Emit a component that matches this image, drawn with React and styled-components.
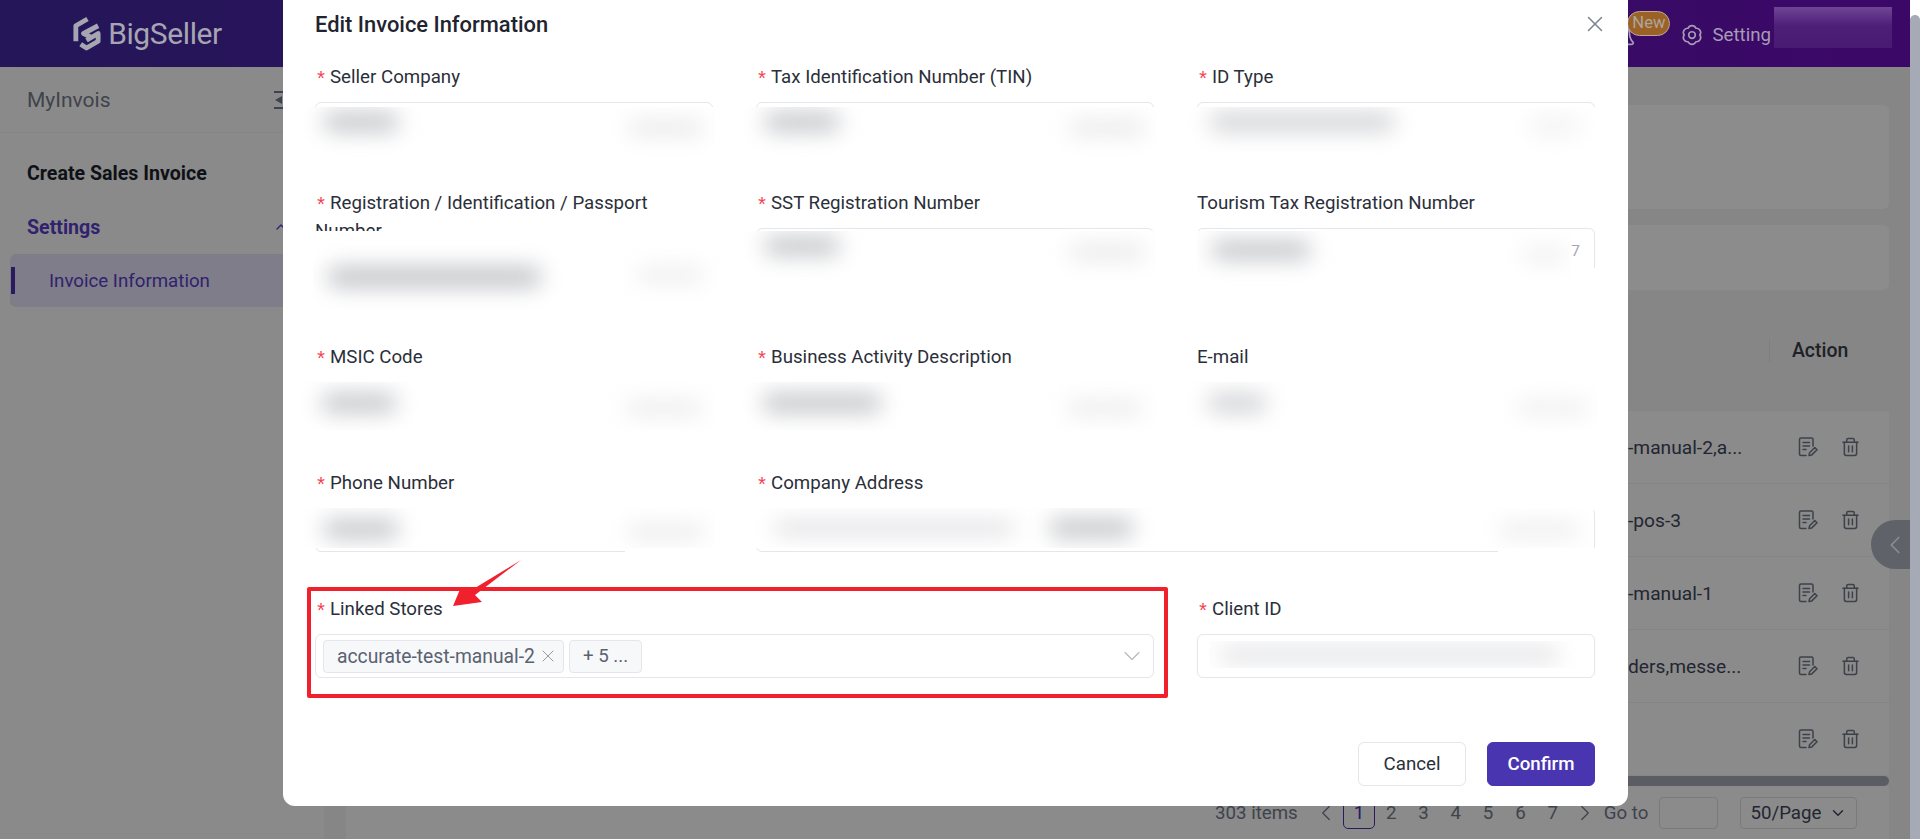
import React from 'react';
import styled, { createGlobalStyle } from 'styled-components';
import { X, ChevronDown, ChevronLeft, ChevronRight, ChevronUp, Bell } from 'lucide-react';

const GlobalStyle = createGlobalStyle`
	html, body {
		margin: 0;
		padding: 0;
		height: 100%;
		overflow: hidden;
		font-family: Roboto, "Liberation Sans", sans-serif;
	}
	* {
		box-sizing: border-box;
	}
`

const Page = styled.div`
	position: relative;
	display: flex;
	width: 1920px;
	height: 839px;
	overflow: hidden;
	background: #f5f5f5;
`

const Viewport = styled.div`
	flex: 1;
	display: flex;
	flex-direction: column;
	min-width: 0;
`

const Scrollbar = styled.div`
	width: 10px;
	padding-top: 15px;
	background: #fff;
	position: relative;
	z-index: 3;

	&::after {
		content: '';
		display: block;
		height: 100%;
		border-radius: 5px 5px 0 0;
		background: #a6a9b6;
	}
`

/* the header sits above the overlay, its colours are already the dimmed ones */
const Header = styled.header`
	position: relative;
	z-index: 2;
	height: 67px;
	flex-shrink: 0;
	display: flex;
	align-items: center;
	background: linear-gradient(90deg, #241658 0%, #3c0868 100%);
`

const Brand = styled.div`
	width: 283px;
	padding-left: 10px;
	display: flex;
	justify-content: center;
	align-items: center;
	gap: 6px;
	color: #a6a6b2;
	font-size: 30px;
	letter-spacing: -0.4px;
`

const HeaderTools = styled.div`
	margin-left: auto;
	display: flex;
	align-items: center;
	height: 100%;
	color: #a69cb6;
	font-size: 18.7px;
`

const BellWrap = styled.div`
	position: relative;
	width: 30px;
	height: 30px;
	margin-right: 44px;
	margin-top: 8px;
`

const NewBadge = styled.span`
	position: absolute;
	left: 20px;
	top: -12px;
	width: 43px;
	height: 25px;
	line-height: 22px;
	text-align: center;
	border-radius: 13px;
	border: 1px solid #b8a99a;
	background: #9c6124;
	color: #aaa79f;
	font-size: 16.6px;
`

const SettingItem = styled.div`
	display: flex;
	align-items: center;
	gap: 9px;
	margin-top: 2px;
`

const UserBlur = styled.div`
	width: 118px;
	height: 41px;
	margin: -12px 18px 0 3px;
	background: linear-gradient(180deg, #6f4595 0%, #4f1f78 45%, #481a72 100%);
`

const Body = styled.div`
	flex: 1;
	display: flex;
	min-height: 0;
`

const Sidebar = styled.aside`
	width: 324px;
	flex-shrink: 0;
	background: #fcfcfc;
	padding: 0 10px;
`

const SideTitle = styled.div`
	height: 66px;
	margin: 0 -10px;
	padding: 0 30px 0 27px;
	display: flex;
	align-items: center;
	justify-content: space-between;
	font-size: 21px;
	color: #747b8c;
	border-bottom: 1px solid #f0f0f0;
`

const SideHeading = styled.div`
	height: 54px;
	margin-top: ${p => p.$first ? '13px' : '0'};
	padding-left: 17px;
	display: flex;
	align-items: center;
	justify-content: space-between;
	font-size: 19.6px;
	font-weight: 700;
	color: ${p => p.$active ? '#5a3fc8' : '#1b1f2a'};
`

const SideChevron = styled(ChevronUp)`
	margin-right: 25px;
`

const SideItem = styled.div`
	position: relative;
	height: 53px;
	padding-left: 39px;
	display: flex;
	align-items: center;
	border-radius: 6px;
	background: #e6e3fa;
	color: #5a3fc8;
	font-size: 18.7px;

	&::before {
		content: '';
		position: absolute;
		left: 1px;
		top: 13px;
		width: 4px;
		height: 27px;
		background: #4a32b0;
	}
`

const Main = styled.main`
	flex: 1;
	min-width: 0;
	padding: 38px 21px 0 22px;
	display: flex;
	flex-direction: column;
	align-items: stretch;
`

const Card = styled.div`
	height: ${p => p.$height}px;
	margin-bottom: ${p => p.$gap}px;
	background: #fff;
	border-radius: 6px;
	flex-shrink: 0;
`

const TablePanel = styled.div`
	flex: 1;
	display: flex;
	flex-direction: column;
`

const TableHead = styled.div`
	height: 120px;
	flex-shrink: 0;
	display: flex;
	align-items: center;
	justify-content: flex-end;
	font-size: 19.4px;
	font-weight: 500;
	color: #383c48;
`

const HeadCell = styled.div`
	width: 120px;
	padding-left: 22px;
	border-left: 1px solid #e6e6e6;
`

const Row = styled.div`
	height: 73px;
	flex-shrink: 0;
	display: flex;
	align-items: center;
	background: #fdfdfd;
	border-top: 1px solid #f0f0f0;
	font-size: 19.2px;
	color: #40465a;
`

const RowText = styled.div`
	flex: 1;
	padding-left: 1282px;
	white-space: nowrap;
`

const RowIcons = styled.div`
	width: 91px;
	flex-shrink: 0;
	display: flex;
	gap: 24px;
	color: #6f7788;
`

const TableScroll = styled.div`
	height: 10px;
	margin-top: 1px;
	flex-shrink: 0;
	border-radius: 0 5px 5px 0;
	background: #a4a9b4;
`

const Pager = styled.div`
	height: 54px;
	flex-shrink: 0;
	padding-left: 869px;
	display: flex;
	align-items: center;
	background: #fdfdfd;
	font-size: 18.7px;
	color: #747b8c;
	white-space: nowrap;
`

const PagerPrev = styled(ChevronLeft)`
	margin: 0 4px 0 15px;
	flex-shrink: 0;
`

const PagerNext = styled(ChevronRight)`
	margin: 0 6px 0 3px;
	flex-shrink: 0;
`

const PagerNum = styled.span`
	width: 32.3px;
	height: 32px;
	display: flex;
	align-items: center;
	justify-content: center;
	border-radius: 5px;
	border: 1px solid ${p => p.$active ? '#4a32b0' : 'transparent'};
	color: ${p => p.$active ? '#4a32b0' : 'inherit'};
`

const GoInput = styled.span`
	width: 59px;
	height: 32px;
	margin: 0 22px 0 11px;
	border: 1px solid #dedede;
	border-radius: 4px;
`

const PageSelect = styled.span`
	width: 117px;
	height: 32px;
	display: flex;
	align-items: center;
	justify-content: center;
	gap: 8px;
	border: 1px solid #dedede;
	border-radius: 4px;
	color: #40465a;
`

const CollapseTab = styled.div`
	position: absolute;
	right: 10px;
	top: 520px;
	width: 39px;
	height: 49px;
	padding-left: 9px;
	display: flex;
	align-items: center;
	justify-content: center;
	border-radius: 25px 0 0 25px;
	background: #adb3bd;
	color: #fff;
`

const Overlay = styled.div`
	position: absolute;
	inset: 0 10px 0 0;
	background: rgba(0, 0, 0, 0.45);
	z-index: 1;
`

const Modal = styled.section`
	position: absolute;
	left: 283px;
	top: 0;
	width: 1345px;
	height: 806px;
	padding: 0 33px 0 32px;
	display: flex;
	flex-direction: column;
	background: #fff;
	border-radius: 0 0 12px 12px;
	z-index: 3;
`

const ModalHead = styled.div`
	height: 50px;
	padding-bottom: 2px;
	flex-shrink: 0;
	display: flex;
	align-items: center;
	justify-content: space-between;
`

const ModalTitle = styled.h2`
	margin: 0;
	font-size: 21.9px;
	font-weight: 500;
	color: #1f2430;
`

const CloseBtn = styled.span`
	display: flex;
	color: #7d8590;
	margin-right: -13px;
`

const FormGrid = styled.div`
	display: grid;
	grid-template-columns: repeat(3, 398px);
	grid-template-rows: 126px 154px 126px 126px 126px;
	column-gap: 43px;
`

const Field = styled.div`
	position: relative;
	grid-column: ${p => p.$span ? `span ${p.$span}` : 'auto'};
	padding-top: 13px;
`

const Label = styled.div`
	height: ${p => p.$tall ? '65px' : '39px'};
	overflow: hidden;
	font-size: 18.7px;
	line-height: 28px;
	color: #2b2f3a;
`

const Star = styled.span`
	display: inline-block;
	width: 15px;
	line-height: 0;
	vertical-align: -3px;
	color: #f5414e;
	font-family: "Liberation Mono", monospace;
	font-size: 20px;
`

const InputBox = styled.div`
	position: relative;
	height: 44px;
	display: flex;
	align-items: center;
	padding: 0 12px;
	border: 1px solid #e5e6ec;
	border-radius: 6px;
	background: #fff;
`

const Patch = styled.div`
	position: absolute;
	left: ${p => p.$x}px;
	top: ${p => p.$y}px;
	width: ${p => p.$w}px;
	height: ${p => p.$h}px;
	background: #fff;
	overflow: hidden;
`

const Smudge = styled.div`
	position: absolute;
	left: ${p => p.$x}px;
	top: ${p => p.$y}px;
	width: ${p => p.$w}px;
	height: ${p => p.$h}px;
	border-radius: 10px;
	background: ${p => p.$color || '#c0c2c6'};
	filter: blur(11px);
`

const Counter = styled.span`
	position: absolute;
	right: 14px;
	top: 13px;
	font-size: 15.5px;
	color: #a3a8b3;
`

const SelectBox = styled(InputBox)`
	padding: 0 0 0 7px;
	gap: 5px;
`

const Tag = styled.span`
	height: 33px;
	padding: 0 5px 0 13px;
	display: flex;
	align-items: center;
	gap: 3px;
	border: 1px solid #e5e6ec;
	border-radius: 4px;
	background: #f7f8fa;
	font-size: 19.3px;
	color: #5a6270;

	svg {
		color: #8b919c;
	}
`

const MoreTag = styled(Tag)`
	padding: 0 13px;
	font-size: 18.7px;
`

const Caret = styled.span`
	margin-left: auto;
	margin-right: 7px;
	display: flex;
	color: #b4b8c1;
`

const HighlightBox = styled.div`
	position: absolute;
	left: 307px;
	top: 587px;
	width: 861px;
	height: 111px;
	border: 4px solid #f0212d;
	border-radius: 2px;
	pointer-events: none;
	z-index: 4;
`

const ArrowMark = styled.svg`
	position: absolute;
	left: 450px;
	top: 558px;
	pointer-events: none;
	z-index: 4;
`

const Footer = styled.div`
	margin-top: auto;
	padding-bottom: 20px;
	display: flex;
	justify-content: flex-end;
	gap: 21px;
`

const Button = styled.button`
	width: 108px;
	height: 44px;
	border-radius: 6px;
	border: 1px solid ${p => p.$primary ? '#4a35b0' : '#e5e6ec'};
	background: ${p => p.$primary ? '#4a35b0' : '#fff'};
	color: ${p => p.$primary ? '#fff' : '#2b2f3a'};
	font-family: inherit;
	font-size: 18.7px;
	font-weight: ${p => p.$primary ? 500 : 400};
`

const LogoMark = () => (
	<svg width="31" height="35" viewBox="0 0 32 36" fill="none" stroke="currentColor" strokeWidth="5" strokeLinejoin="round">
		<path d="M17 3 5 10v16" />
		<path d="M28 10 13 18l8 4" />
		<path d="m10 29 6 4 12-7v-8l-12 7" />
	</svg>
)

const GearIcon = () => (
	<svg width="22" height="22" viewBox="0 0 24 24" fill="none" stroke="currentColor" strokeWidth="1.8" strokeLinejoin="round">
		<path d="M20.5 12a4.6 4.6 0 0 1-4.25 7.36 4.6 4.6 0 0 1-8.5 0A4.6 4.6 0 0 1 3.5 12a4.6 4.6 0 0 1 4.25-7.36 4.6 4.6 0 0 1 8.5 0A4.6 4.6 0 0 1 20.5 12z" />
		<circle cx="12" cy="12" r="3.6" />
	</svg>
)

const CollapseIcon = () => (
	<svg width="20" height="18" viewBox="0 0 20 18" fill="currentColor">
		<rect x="0" y="0" width="20" height="2" />
		<rect x="0" y="16" width="20" height="2" />
		<path d="M1 9 8 5v8z" />
	</svg>
)

const EditIcon = () => (
	<svg width="20" height="20" viewBox="0 0 20 20" fill="none" stroke="currentColor" strokeWidth="1.5" strokeLinecap="round" strokeLinejoin="round">
		<path d="M8 18.5H3A1.5 1.5 0 0 1 1.5 17V2.5A1.5 1.5 0 0 1 3 1h10.5A1.5 1.5 0 0 1 15 2.5V9" />
		<path d="M5 5.5h6.5M5 9h6.5M5 12.5h3" />
		<path d="m11 18.5.6-2.8 5.2-5.2 2.2 2.2-5.2 5.2z" />
	</svg>
)

const TrashIcon = () => (
	<svg width="17" height="20" viewBox="0 0 18 20" fill="none" stroke="currentColor" strokeWidth="1.6" strokeLinecap="round" strokeLinejoin="round">
		<path d="M1 5h16M5 5V2.5A1.5 1.5 0 0 1 6.5 1h5A1.5 1.5 0 0 1 13 2.5V5" />
		<path d="M2.5 5v12A2 2 0 0 0 4.5 19h9a2 2 0 0 0 2-2V5" />
		<path d="M7 9v6M11 9v6" />
	</svg>
)

const rows = ['-manual-2,a...', '-pos-3', '-manual-1', 'ders,messe...', '']

// redacted blocks over the inputs, coordinates are relative to the field
const Redact = ({ patch, smudges = [] }) => (
	<Patch $x={patch[0]} $y={patch[1]} $w={patch[2]} $h={patch[3]}>
		{smudges.map((s, i) => (
			<Smudge key={i} $x={s[0]} $y={s[1]} $w={s[2]} $h={s[3]} $color={s[4]} />
		))}
	</Patch>
)

const fields = [
	{ label: 'Seller Company', req: true, patch: [-12, 57, 412, 49], smudges: [[20, 6, 76, 18], [325, 14, 76, 14, '#e6e6e8']] },
	{ label: 'Tax Identification Number (TIN)', req: true, patch: [-12, 57, 412, 49], smudges: [[20, 6, 76, 18], [325, 14, 76, 14, '#e6e6e8']] },
	{ label: 'ID Type', req: true, patch: [-12, 57, 412, 49], smudges: [[24, 6, 186, 18, '#d0d1d4'], [345, 12, 50, 14, '#efeff1']] },
	{ label: 'Registration / Identification / Passport Number', req: true, tall: true, patch: [-2, 55, 410, 79], smudges: [[14, 36, 215, 20], [325, 38, 66, 12, '#e8e8ea']] },
	{ label: 'SST Registration Number', req: true, patch: [-12, 55, 412, 49], smudges: [[20, 6, 76, 18], [325, 14, 76, 14, '#e6e6e8']] },
	{ label: 'Tourism Tax Registration Number', patch: [0, 55, 374, 56], smudges: [[14, 10, 100, 18], [325, 16, 45, 16, '#f0f0f1']], mask: [374, 92, 30, 20], count: true },
	{ label: 'MSIC Code', req: true, patch: [-14, 52, 414, 48], smudges: [[20, 12, 76, 18], [325, 20, 76, 12, '#e6e6e8']] },
	{ label: 'Business Activity Description', req: true, patch: [-14, 52, 414, 48], smudges: [[20, 12, 120, 18], [325, 20, 76, 12, '#e6e6e8']] },
	{ label: 'E-mail', patch: [-14, 52, 415, 48], smudges: [[24, 12, 60, 18, '#cfd0d3'], [335, 20, 70, 12, '#eaeaec']] },
	{ label: 'Phone Number', req: true, patch: [-12, 52, 412, 40], smudges: [[20, 12, 76, 18], [325, 18, 76, 12, '#e6e6e8']], mask: [310, 92, 100, 6] },
	{ label: 'Company Address', req: true, span: 2, patch: [-2, 52, 839, 40], smudges: [[20, 14, 240, 12, '#d9dadd'], [295, 11, 85, 18], [745, 16, 80, 12, '#e8e8ea']], mask: [742, 92, 100, 6] },
]

const App = () => (
	<>
		<GlobalStyle />
		<Page>
			<Viewport>
				<Header>
					<Brand><LogoMark />BigSeller</Brand>
					<HeaderTools>
						<BellWrap>
							<Bell size={30} strokeWidth={1.4} />
							<NewBadge>New</NewBadge>
						</BellWrap>
						<SettingItem><GearIcon />Setting</SettingItem>
						<UserBlur />
					</HeaderTools>
				</Header>
				<Body>
					<Sidebar>
						<SideTitle>MyInvois<CollapseIcon /></SideTitle>
						<SideHeading $first>Create Sales Invoice</SideHeading>
						<SideHeading $active>Settings<SideChevron size={16} /></SideHeading>
						<SideItem>Invoice Information</SideItem>
					</Sidebar>
					<Main>
						<Card $height={104} $gap={16} />
						<Card $height={65} $gap={0} />
						<TablePanel>
							<TableHead><HeadCell>Action</HeadCell></TableHead>
							{rows.map((r, i) => (
								<Row key={i}>
									<RowText>{r}</RowText>
									<RowIcons><EditIcon /><TrashIcon /></RowIcons>
								</Row>
							))}
							<TableScroll />
							<Pager>
								303 items
								<PagerPrev size={26} strokeWidth={1.2} />
								<PagerNum $active>1</PagerNum>
								{[2, 3, 4, 5, 6, 7].map(n => <PagerNum key={n}>{n}</PagerNum>)}
								<PagerNext size={26} strokeWidth={1.2} />
								Go to
								<GoInput />
								<PageSelect>50/Page<ChevronDown size={18} /></PageSelect>
							</Pager>
						</TablePanel>
					</Main>
				</Body>
			</Viewport>
			<Scrollbar />
			<CollapseTab><ChevronLeft size={32} strokeWidth={1.4} /></CollapseTab>
			<Overlay />
			<Modal>
				<ModalHead>
					<ModalTitle>Edit Invoice Information</ModalTitle>
					<CloseBtn><X size={26} strokeWidth={1.4} /></CloseBtn>
				</ModalHead>
				<FormGrid>
					{fields.map(f => (
						<Field key={f.label} $span={f.span}>
							<Label $tall={f.tall}>{f.req && <Star>*</Star>}{f.label}</Label>
							<InputBox>{f.count && <Counter>7</Counter>}</InputBox>
							<Redact patch={f.patch} smudges={f.smudges} />
							{f.mask && <Redact patch={f.mask} />}
						</Field>
					))}
					<Field $span={2}>
						<Label><Star>*</Star>Linked Stores</Label>
						<SelectBox>
							<Tag>accurate-test-manual-2<X size={20} strokeWidth={1.1} /></Tag>
							<MoreTag>+ 5 ...</MoreTag>
							<Caret><ChevronDown size={28} strokeWidth={1} /></Caret>
						</SelectBox>
					</Field>
					<Field>
						<Label><Star>*</Star>Client ID</Label>
						<InputBox />
						<Redact patch={[12, 59, 373, 27]} smudges={[[10, 7, 340, 13, '#dcdde0']]} />
					</Field>
				</FormGrid>
				<Footer>
					<Button>Cancel</Button>
					<Button $primary>Confirm</Button>
				</Footer>
			</Modal>
			<HighlightBox />
			<ArrowMark width="76" height="66" viewBox="0 0 76 66">
				<path d="M71 2 20 33l-9-4-8 19 29-4-7-7z" fill="#f0212d" />
			</ArrowMark>
		</Page>
	</>
)

export default App
